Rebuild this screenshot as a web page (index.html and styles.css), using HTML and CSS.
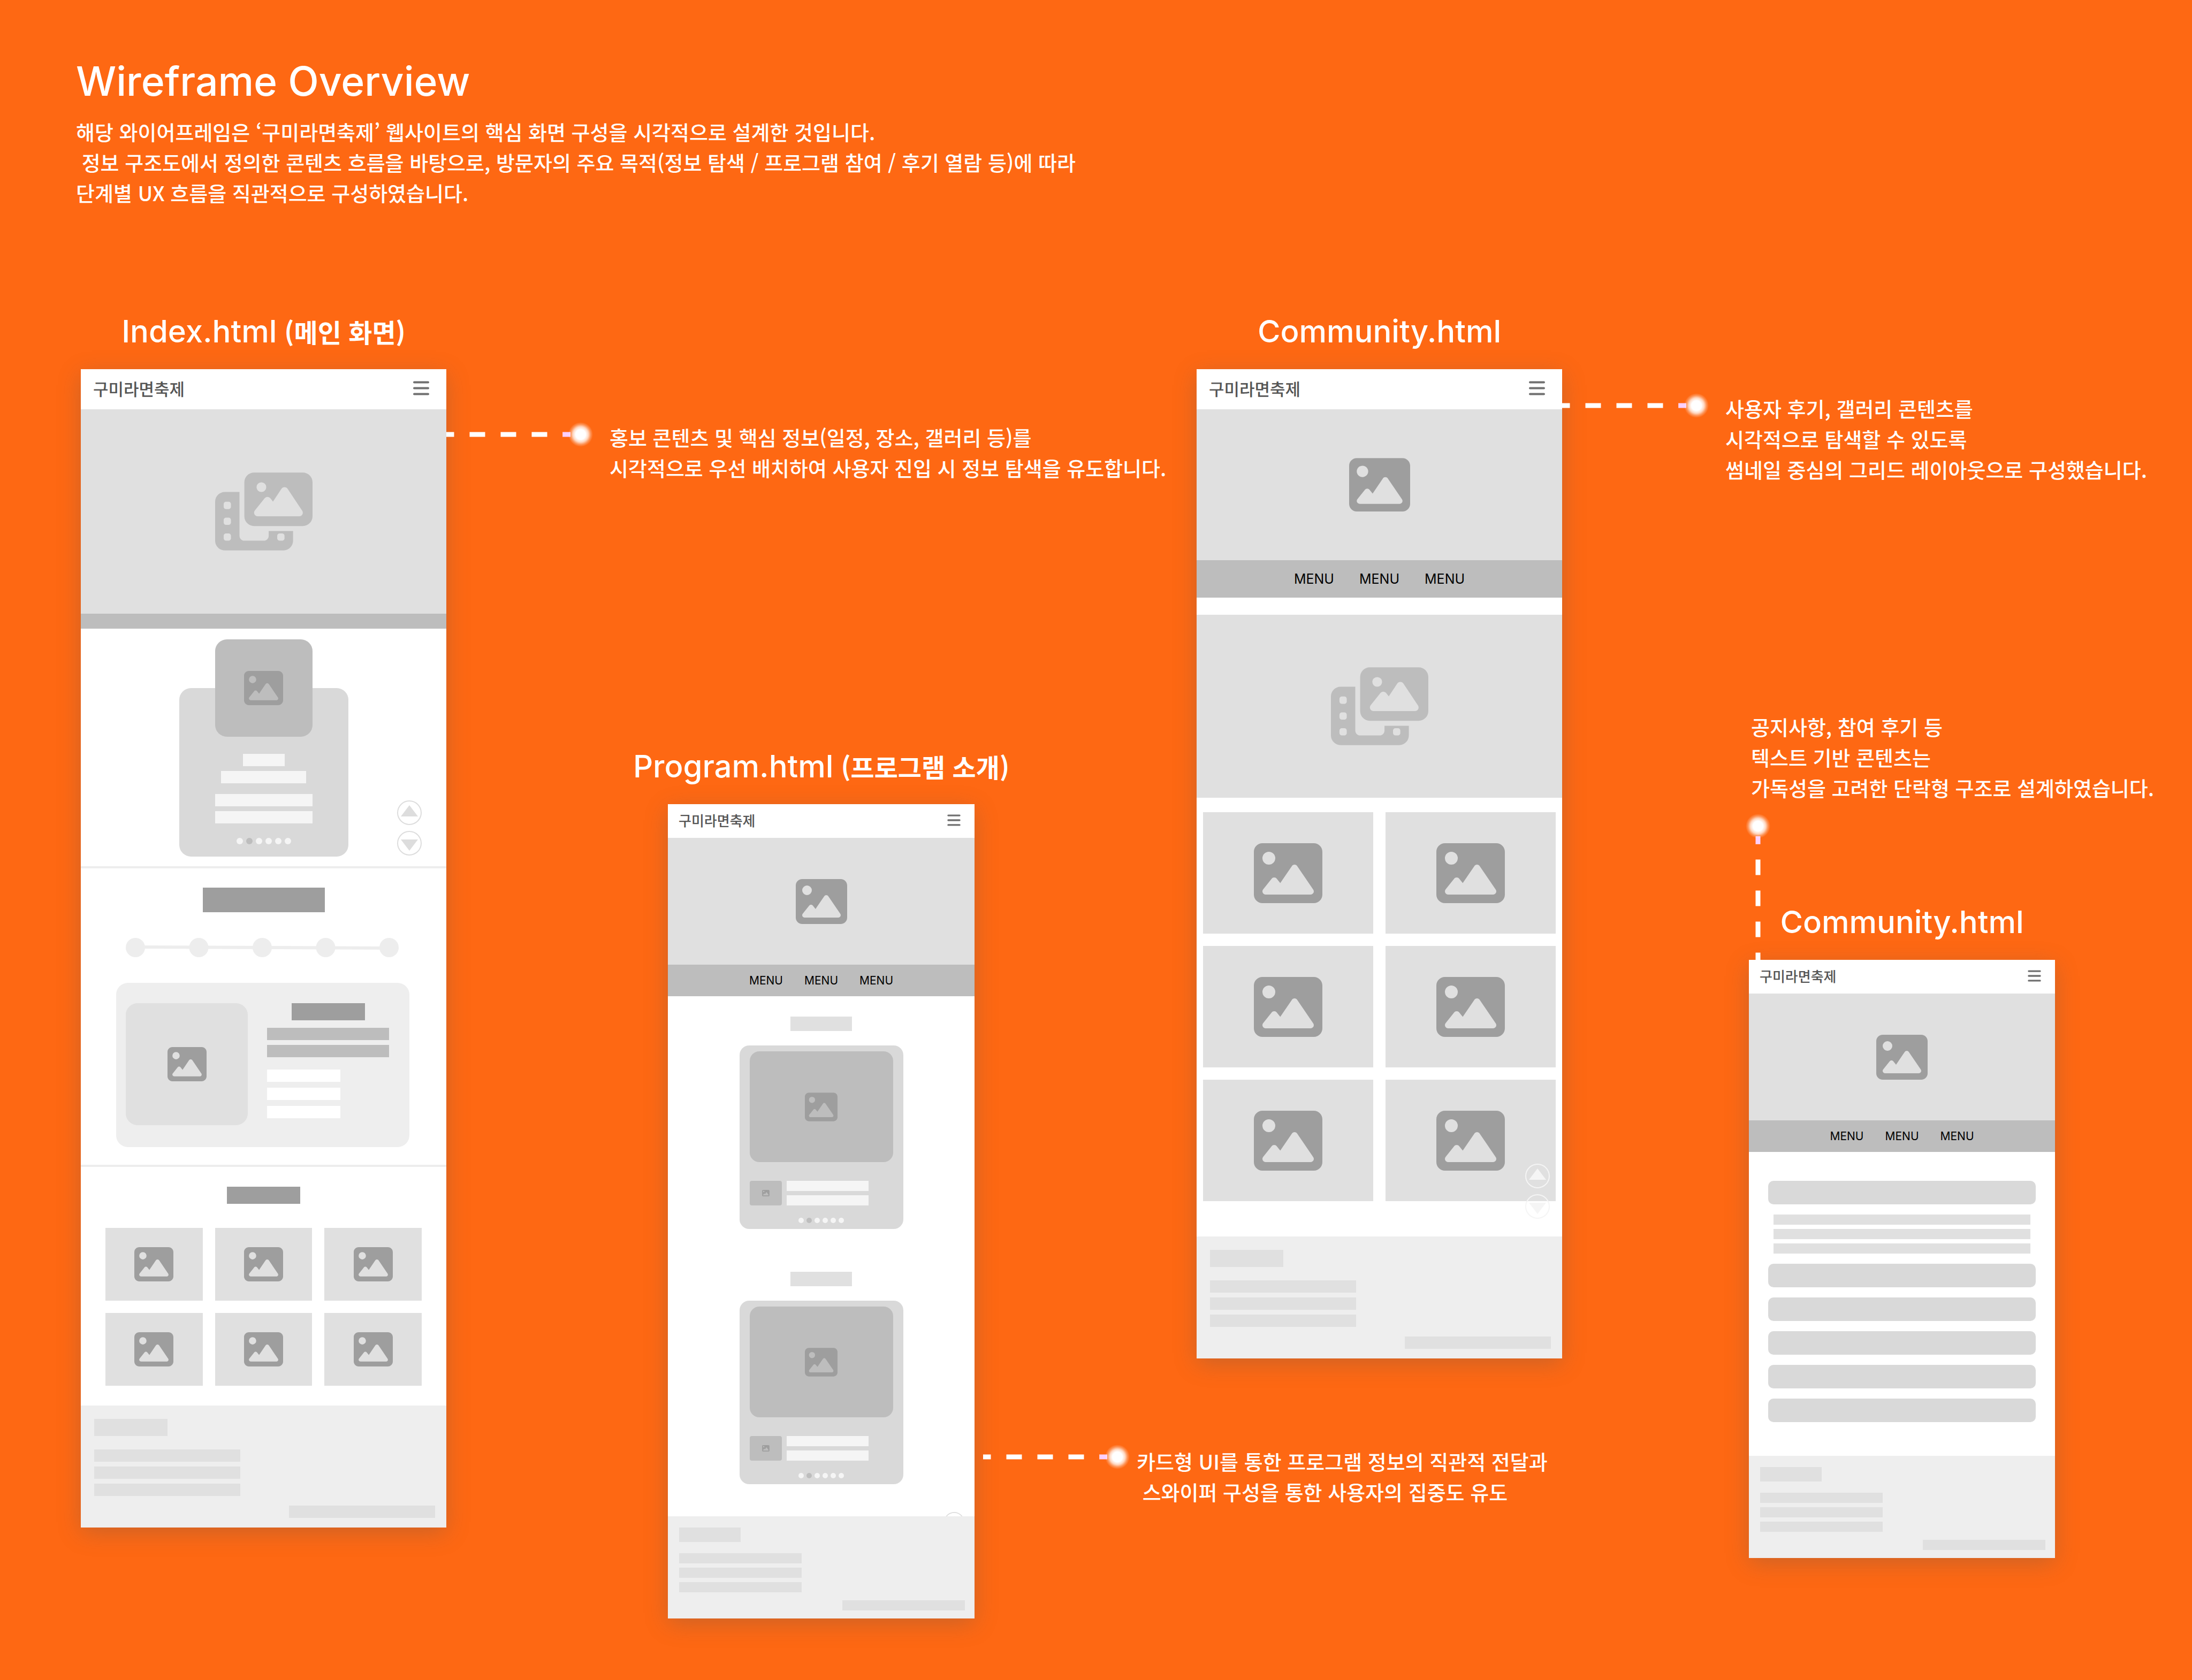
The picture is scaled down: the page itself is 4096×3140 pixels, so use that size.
FILE: index.html
```html
<!DOCTYPE html>
<html lang="ko">
<head>
<meta charset="utf-8">
<meta name="viewport" content="width=device-width, initial-scale=1">
<title>Wireframe Overview</title>
<link rel="stylesheet" href="styles.css">
</head>
<body>
<svg class="sprite" aria-hidden="true">
  <defs>
    <radialGradient id="glow">
      <stop offset="0" stop-color="#fff"/>
      <stop offset=".4" stop-color="#fff"/>
      <stop offset=".62" stop-color="#fff" stop-opacity=".75"/>
      <stop offset=".82" stop-color="#fff" stop-opacity=".28"/>
      <stop offset="1" stop-color="#fff" stop-opacity="0"/>
    </radialGradient>
  </defs>
  <symbol id="i-image" viewBox="0 32 512 448"><path fill="currentColor" d="M0 96C0 60.7 28.7 32 64 32H448c35.300 0 64 28.700 64 64V416c0 35.300-28.700 64-64 64H64c-35.300 0-64-28.700-64-64V96zM323.800 202.500c-4.500-6.600-11.900-10.500-19.800-10.500s-15.400 3.900-19.800 10.500l-87 127.600L170.700 297c-4.600-5.700-11.500-9-18.700-9s-14.200 3.300-18.700 9l-64 80c-5.800 7.200-6.900 17.100-2.900 25.400s12.400 13.600 21.600 13.600h96 32H424c8.900 0 17.100-4.900 21.200-12.800s3.600-17.400-1.400-24.700l-120-176zM112 192a48 48 0 1 0 0-96 48 48 0 1 0 0 96z"/></symbol>
  <symbol id="i-film" viewBox="0 0 640 512"><path fill="currentColor" fill-rule="evenodd" d="M256 0H576c35.300 0 64 28.700 64 64V288c0 35.300-28.700 64-64 64H256c-35.300 0-64-28.700-64-64V64c0-35.300 28.700-64 64-64zM476 106.700C471.500 100 464 96 456 96s-15.500 4-20 10.700l-56 84L362.700 169c-4.600-5.700-11.500-9-18.700-9s-14.200 3.300-18.700 9l-64 80c-5.800 7.200-6.900 17.100-2.900 25.400s12.400 13.600 21.600 13.600h80 48H552c8.900 0 17-4.900 21.200-12.700s3.700-17.300-1.200-24.600l-96-144zM336 96a32 32 0 1 0 -64 0 32 32 0 1 0 64 0zM64 128h96V384v32c0 17.700 14.300 32 32 32H320c17.700 0 32-14.300 32-32V384H512v64c0 35.300-28.700 64-64 64H64c-35.300 0-64-28.700-64-64V192c0-35.300 28.700-64 64-64zm8 64c-8.800 0-16 7.200-16 16v16c0 8.800 7.200 16 16 16H88c8.800 0 16-7.200 16-16V208c0-8.800-7.200-16-16-16H72zm0 104c-8.800 0-16 7.200-16 16v16c0 8.800 7.200 16 16 16H88c8.800 0 16-7.200 16-16V312c0-8.800-7.200-16-16-16H72zm0 104c-8.800 0-16 7.200-16 16v16c0 8.800 7.200 16 16 16H88c8.800 0 16-7.200 16-16V416c0-8.800-7.200-16-16-16H72zm336 16v16c0 8.800 7.200 16 16 16h16c8.800 0 16-7.200 16-16V416c0-8.800-7.200-16-16-16H424c-8.800 0-16 7.200-16 16z"/></symbol>
  <symbol id="i-menu" viewBox="0 0 30 27"><path fill="none" stroke="currentColor" stroke-width="4" stroke-linecap="round" d="M2 2.500H28M2 13.500H28M2 24.500H28"/></symbol>
  <symbol id="i-up" viewBox="0 0 46 46"><circle cx="23" cy="23" r="22" fill="none" stroke="currentColor" stroke-width="2"/><path fill="currentColor" d="M23 9L39 30H7z"/></symbol>
  <symbol id="i-down" viewBox="0 0 46 46"><circle cx="23" cy="23" r="22" fill="none" stroke="currentColor" stroke-width="2"/><path fill="currentColor" d="M23 37L7 16H39z"/></symbol>
  <symbol id="i-line" viewBox="0 0 275 48"><path stroke="#fff" stroke-width="9" stroke-dasharray="29 29" stroke-dashoffset="14.500" d="M0 24H218"/><path stroke="#fccfff" stroke-width="9" d="M217.500 24H232"/><circle cx="251" cy="24" r="23" fill="url(#glow)"/></symbol>
</svg>

<header class="intro">
  <h1 class="intro-title">Wireframe Overview</h1>
  <p class="intro-text">해당 와이어프레임은 ‘구미라면축제’ 웹사이트의 핵심 화면 구성을 시각적으로 설계한 것입니다.<br>&nbsp;정보 구조도에서 정의한 콘텐츠 흐름을 바탕으로, 방문자의 주요 목적(정보 탐색 / 프로그램 참여 / 후기 열람 등)에 따라<br>단계별 UX 흐름을 직관적으로 구성하였습니다.</p>
</header>

<main class="board">
  <section class="screen screen-index">
    <h2 class="screen-title">Index.html<span class="screen-name">(메인 화면)</span></h2>
    <div class="phone">
      <header class="topbar"><span class="brand">구미라면축제</span><button class="burger" type="button" aria-label="메뉴"><svg><use href="#i-menu"/></svg></button></header>
      <div class="hero hero-tall"><svg class="film"><use href="#i-film"/></svg></div>
      <div class="strip"></div>
      <section class="promo">
        <div class="promo-card">
          <div class="promo-thumb"><svg class="pic"><use href="#i-image"/></svg></div>
          <i class="bar pale w-xs"></i>
          <i class="bar pale w-md"></i>
          <i class="bar pale w-lg spaced"></i>
          <i class="bar pale w-lg"></i>
          <div class="dots"><i></i><i class="on"></i><i></i><i></i><i></i><i></i></div>
        </div>
        <div class="jump">
          <button type="button" aria-label="위로"><svg><use href="#i-up"/></svg></button>
          <button type="button" aria-label="아래로"><svg><use href="#i-down"/></svg></button>
        </div>
      </section>
      <section class="schedule">
        <div class="block-title block-title-lg"></div>
        <svg class="timeline" viewBox="0 0 510 38"><path stroke="currentColor" stroke-width="6" d="M18 18L492 20"/><g fill="currentColor"><circle cx="18" cy="19" r="18"/><circle cx="136.500" cy="19" r="18"/><circle cx="255" cy="19" r="18"/><circle cx="373.500" cy="19" r="18"/><circle cx="492" cy="19" r="18"/></g></svg>
        <div class="event">
          <div class="event-thumb"><svg class="pic"><use href="#i-image"/></svg></div>
          <div class="event-info">
            <i class="block-title"></i>
            <i class="bar mid"></i>
            <i class="bar mid"></i>
            <div class="event-list"><i class="bar white"></i><i class="bar white"></i><i class="bar white"></i></div>
          </div>
        </div>
      </section>
      <section class="gallery">
        <div class="block-title"></div>
        <div class="tiles tiles-3">
          <div class="tile"><svg class="pic"><use href="#i-image"/></svg></div>
          <div class="tile"><svg class="pic"><use href="#i-image"/></svg></div>
          <div class="tile"><svg class="pic"><use href="#i-image"/></svg></div>
          <div class="tile"><svg class="pic"><use href="#i-image"/></svg></div>
          <div class="tile"><svg class="pic"><use href="#i-image"/></svg></div>
          <div class="tile"><svg class="pic"><use href="#i-image"/></svg></div>
        </div>
      </section>
      <footer class="foot"><i class="foot-logo"></i><i class="foot-line"></i><i class="foot-line"></i><i class="foot-line"></i><i class="foot-line foot-copy"></i></footer>
    </div>
  </section>

  <aside class="note note-index">
    <svg class="lead"><use href="#i-line"/></svg>
    <p>홍보 콘텐츠 및 핵심 정보(일정, 장소, 갤러리 등)를<br>시각적으로 우선 배치하여 사용자 진입 시 정보 탐색을 유도합니다.</p>
  </aside>

  <section class="screen screen-program">
    <h2 class="screen-title">Program.html<span class="screen-name">(프로그램 소개)</span></h2>
    <div class="phone phone-sm">
      <header class="topbar"><span class="brand">구미라면축제</span><button class="burger" type="button" aria-label="메뉴"><svg><use href="#i-menu"/></svg></button></header>
      <div class="hero"><svg class="pic pic-hero"><use href="#i-image"/></svg></div>
      <nav class="menu"><a href="#">MENU</a><a href="#">MENU</a><a href="#">MENU</a></nav>
      <div class="programs">
        <section class="program">
          <div class="program-title"></div>
          <div class="program-card">
            <div class="program-photo"><svg class="pic"><use href="#i-image"/></svg></div>
            <div class="program-meta"><div class="avatar"><svg><use href="#i-image"/></svg></div><div class="meta-lines"><i class="bar pale"></i><i class="bar pale"></i></div></div>
            <div class="dots"><i></i><i class="on"></i><i></i><i></i><i></i><i></i></div>
          </div>
        </section>
        <section class="program">
          <div class="program-title"></div>
          <div class="program-card">
            <div class="program-photo"><svg class="pic"><use href="#i-image"/></svg></div>
            <div class="program-meta"><div class="avatar"><svg><use href="#i-image"/></svg></div><div class="meta-lines"><i class="bar pale"></i><i class="bar pale"></i></div></div>
            <div class="dots"><i></i><i class="on"></i><i></i><i></i><i></i><i></i></div>
          </div>
        </section>
        <div class="jump jump-tucked"><button type="button" aria-label="위로"><svg><use href="#i-up"/></svg></button></div>
      </div>
      <footer class="foot"><i class="foot-logo"></i><i class="foot-line"></i><i class="foot-line"></i><i class="foot-line"></i><i class="foot-line foot-copy"></i></footer>
    </div>
  </section>

  <aside class="note note-program">
    <svg class="lead"><use href="#i-line"/></svg>
    <p>카드형 UI를 통한 프로그램 정보의 직관적 전달과<br>&nbsp;스와이퍼 구성을 통한 사용자의 집중도 유도</p>
  </aside>

  <section class="screen screen-community">
    <h2 class="screen-title">Community.html</h2>
    <div class="phone">
      <header class="topbar"><span class="brand">구미라면축제</span><button class="burger" type="button" aria-label="메뉴"><svg><use href="#i-menu"/></svg></button></header>
      <div class="hero"><svg class="pic pic-hero"><use href="#i-image"/></svg></div>
      <nav class="menu"><a href="#">MENU</a><a href="#">MENU</a><a href="#">MENU</a></nav>
      <div class="feature"><svg class="film"><use href="#i-film"/></svg></div>
      <div class="feed">
        <div class="tiles tiles-2">
          <div class="tile"><svg class="pic pic-lg"><use href="#i-image"/></svg></div>
          <div class="tile"><svg class="pic pic-lg"><use href="#i-image"/></svg></div>
          <div class="tile"><svg class="pic pic-lg"><use href="#i-image"/></svg></div>
          <div class="tile"><svg class="pic pic-lg"><use href="#i-image"/></svg></div>
          <div class="tile"><svg class="pic pic-lg"><use href="#i-image"/></svg></div>
          <div class="tile"><svg class="pic pic-lg"><use href="#i-image"/></svg></div>
        </div>
        <div class="jump jump-light">
          <button type="button" aria-label="위로"><svg><use href="#i-up"/></svg></button>
          <button type="button" aria-label="아래로"><svg><use href="#i-down"/></svg></button>
        </div>
      </div>
      <footer class="foot"><i class="foot-logo"></i><i class="foot-line"></i><i class="foot-line"></i><i class="foot-line"></i><i class="foot-line foot-copy"></i></footer>
    </div>
  </section>

  <aside class="note note-community">
    <svg class="lead"><use href="#i-line"/></svg>
    <p>사용자 후기, 갤러리 콘텐츠를<br>시각적으로 탐색할 수 있도록<br>썸네일 중심의 그리드 레이아웃으로 구성했습니다.</p>
  </aside>

  <aside class="note note-board">
    <p>공지사항, 참여 후기 등<br>텍스트 기반 콘텐츠는<br>가독성을 고려한 단락형 구조로 설계하였습니다.</p>
    <svg class="lead-down" viewBox="0 0 48 275"><path stroke="#fff" stroke-width="9" stroke-dasharray="29 29" stroke-dashoffset="14.500" d="M24 275V57"/><path stroke="#fccfff" stroke-width="9" d="M24 57.500V43"/><circle cx="24" cy="24" r="23" fill="url(#glow)"/></svg>
  </aside>

  <section class="screen screen-board">
    <h2 class="screen-title">Community.html</h2>
    <div class="phone phone-sm">
      <header class="topbar"><span class="brand">구미라면축제</span><button class="burger" type="button" aria-label="메뉴"><svg><use href="#i-menu"/></svg></button></header>
      <div class="hero"><svg class="pic pic-hero"><use href="#i-image"/></svg></div>
      <nav class="menu"><a href="#">MENU</a><a href="#">MENU</a><a href="#">MENU</a></nav>
      <div class="posts">
        <div class="post"></div>
        <div class="post-body"><i></i><i></i><i></i></div>
        <div class="post"></div>
        <div class="post"></div>
        <div class="post"></div>
        <div class="post"></div>
        <div class="post"></div>
      </div>
      <footer class="foot"><i class="foot-logo"></i><i class="foot-line"></i><i class="foot-line"></i><i class="foot-line"></i><i class="foot-line foot-copy"></i></footer>
    </div>
  </section>
</main>
</body>
</html>
```
FILE: styles.css
```css
* { box-sizing: border-box; }

body {
  margin: 0;
  background: #fe6813;
  color: #fff;
  font-family: "Inter", "Noto Sans CJK KR", sans-serif;
}

h1, h2, p { margin: 0; }
i, svg { display: block; }
button { padding: 0; border: 0; background: none; color: inherit; }
.sprite { position: absolute; width: 0; height: 0; }

/* Intro */
.intro { padding: 104px 142px 195px; }
.intro-title { font-size: 75px; line-height: 96px; font-weight: 500; margin-bottom: 17px; }
.intro-text, .note p {
  font-family: "Noto Sans CJK KR", sans-serif;
  font-size: 38px;
  line-height: 57px;
  font-weight: 500;
  white-space: nowrap;
}

/* Board: screens sit in the even tracks, notes run across the gutters */
.board {
  display: grid;
  grid-template-columns: 151fr 683fr 414fr 573fr 415fr 683fr 349fr 572fr 256fr;
  align-items: start;
  padding-bottom: 113px;
}
.screen, .note { grid-row: 1; min-width: 0; }
.screen-index { grid-column: 2; }
.screen-program { grid-column: 4; margin-top: 813px; }
.screen-community { grid-column: 6; }
.screen-board { grid-column: 8; margin-top: 1104px; }

.screen-title {
  display: flex;
  align-items: center;
  justify-content: center;
  gap: 14px;
  margin-bottom: 35px;
  font-size: 58px;
  line-height: 72px;
  font-weight: 500;
  white-space: nowrap;
}
.screen-name {
  font-family: "Noto Sans CJK KR", sans-serif;
  font-size: 48px;
  font-weight: 700;
}

.note { display: flex; align-items: flex-start; gap: 30px; z-index: 1; }
.note-index { grid-column: 3 / 6; margin-top: 205px; }
.note-program { grid-column: 5 / 8; margin-top: 2116px; padding-left: 16px; gap: 12px; }
.note-program p { padding-top: 3px; }
.note-community { grid-column: 7 / 10; margin-top: 151px; }
.note-board { grid-column: 8 / 10; margin-top: 746px; flex-direction: column; gap: 20px; padding-left: 4px; }
.lead { flex: none; width: 275px; height: 48px; }
.lead-down { width: 48px; height: 275px; margin-left: -11px; }

/* Phone frame */
.phone { background: #fff; color: #9e9e9e; box-shadow: 0 10px 40px rgba(90, 90, 90, .3); }
.topbar {
  display: flex;
  align-items: center;
  justify-content: space-between;
  height: 75px;
  padding: 0 32px 4px 23px;
}
.brand {
  color: #555;
  font-family: "Noto Sans CJK KR", sans-serif;
  font-size: 31px;
  line-height: 40px;
  font-weight: 500;
}
.burger { color: #707070; }
.burger svg { width: 30px; height: 27px; }
.hero, .feature, .tile {
  display: flex;
  align-items: center;
  justify-content: center;
  background: #e0e0e0;
}
.hero { height: 282px; }
.hero-tall { height: 382px; }
.strip { height: 28px; background: #bdbdbd; }
.menu {
  display: flex;
  align-items: center;
  justify-content: center;
  gap: 47px;
  height: 70px;
  background: #bdbdbd;
}
.menu a { color: #000; font-size: 25px; line-height: 32px; text-decoration: none; }

.pic { width: 73px; height: 64px; }
.pic-hero { width: 114px; height: 100px; }
.pic-lg { width: 128px; height: 112px; }
.film { width: 182px; height: 146px; color: #bdbdbd; }

.bar { height: 23px; }
.pale { background: #f5f5f5; }
.mid { background: #bdbdbd; }
.white { background: #fff; }
.block-title { width: 137px; height: 32px; margin: 0 auto; background: #9e9e9e; }
.block-title-lg { width: 228px; height: 46px; }

.dots { display: flex; justify-content: center; gap: 6px; }
.dots i { width: 12px; height: 12px; border-radius: 50%; background: #f5f5f5; }
.dots .on { background: #bdbdbd; }

.jump { position: absolute; display: grid; gap: 11px; color: #ddd; }
.jump svg { width: 46px; height: 46px; }

/* Index: promo slider */
.promo { position: relative; padding: 111px 0 18px; border-bottom: 4px solid #ededed; }
.promo-card {
  display: flex;
  flex-direction: column;
  align-items: center;
  gap: 9px;
  width: 316px;
  height: 315px;
  margin: 0 auto;
  border-radius: 22px;
  background: #d9d9d9;
}
.promo-thumb {
  display: flex;
  align-items: center;
  justify-content: center;
  flex: none;
  width: 182px;
  height: 182px;
  margin: -91px 0 23px;
  border-radius: 22px;
  background: #bdbdbd;
}
.w-xs { width: 78px; }
.w-md { width: 159px; }
.w-lg { width: 182px; }
.spaced { margin-top: 11px; }
.promo-card .dots { margin-top: 18px; }
.promo .jump { right: 46px; bottom: 20px; }

/* Index: schedule */
.schedule { padding: 36px 66px 33px; border-bottom: 4px solid #ededed; }
.timeline { width: 510px; height: 38px; margin: 47px 23px 47px 18px; color: #ededed; }
.event { display: flex; gap: 36px; margin-right: 3px; padding: 38px 38px 41px 18px; border-radius: 22px; background: #eee; }
.event-thumb {
  display: flex;
  align-items: center;
  justify-content: center;
  flex: 1;
  height: 228px;
  border-radius: 22px;
  background: #e0e0e0;
}
.event-info { flex: 1; display: flex; flex-direction: column; gap: 9px; }
.event-info .block-title { margin-bottom: 5px; }
.event-list { display: grid; gap: 11px; width: 60%; margin-top: 14px; }

/* Index: gallery */
.gallery { padding: 37px 46px; }
.tiles { display: grid; gap: 23px; }
.tiles-3 { grid-template-columns: repeat(3, 1fr); margin-top: 45px; }
.tiles-3 .tile { height: 136px; }

/* Footer */
.foot { padding: 25px 21px 18px 25px; background: #eee; }
.foot i { background: #e0e0e0; }
.foot-logo { width: 137px; height: 32px; margin-bottom: 25px; }
.foot-line { width: 273px; height: 23px; margin-bottom: 9px; }
.foot-copy { margin: 18px 0 0 auto; }

/* Community gallery */
.feature { height: 342px; margin-top: 32px; }
.feed { position: relative; padding: 27px 12px 66px; }
.tiles-2 { grid-template-columns: repeat(2, 1fr); }
.tiles-2 .tile { height: 227px; }
.jump-light { right: 23px; bottom: 33px; color: #f5f5f5; }

/* Small phones */
.phone-sm .topbar { height: 63px; padding: 0 26px 3px 20px; }
.phone-sm .brand { font-size: 26px; }
.phone-sm .burger svg { width: 25px; height: 22px; }
.phone-sm .hero { height: 237px; }
.phone-sm .pic-hero { width: 96px; height: 84px; }
.phone-sm .menu { height: 59px; gap: 40px; }
.phone-sm .menu a { font-size: 21px; }
.phone-sm .bar { height: 19px; }
.phone-sm .foot { padding: 21px 18px 15px 21px; }
.phone-sm .foot-logo { width: 115px; height: 27px; margin-bottom: 21px; }
.phone-sm .foot-line { width: 229px; height: 19px; margin-bottom: 8px; }
.phone-sm .foot-copy { margin: 15px 0 0 auto; }

/* Program list */
.programs { position: relative; display: grid; gap: 80px; padding: 38px 0 60px; overflow: hidden; }
.program-title { width: 115px; height: 27px; margin: 0 auto 27px; background: #e0e0e0; }
.program-card { width: 306px; margin: 0 auto; padding: 11px 19px; border-radius: 18px; background: #d9d9d9; }
.program-photo {
  display: flex;
  align-items: center;
  justify-content: center;
  height: 207px;
  border-radius: 18px;
  background: #bdbdbd;
}
.program-photo .pic { width: 61px; height: 54px; }
.program-meta { display: flex; gap: 9px; margin: 35px 0 23px; }
.avatar {
  display: flex;
  align-items: center;
  justify-content: center;
  width: 60px;
  height: 46px;
  border-radius: 4px;
  background: #bdbdbd;
}
.avatar svg { width: 14px; height: 12px; }
.meta-lines { display: grid; gap: 8px; width: 153px; }
.program-card .dots { gap: 5px; }
.program-card .dots i { width: 10px; height: 10px; }
.jump-tucked { right: 19px; bottom: -30px; }
.jump-tucked svg { width: 38px; height: 38px; }

/* Board posts */
.posts { display: grid; gap: 19px; padding: 54px 36px 63px; }
.post { height: 44px; border-radius: 10px; background: #d9d9d9; }
.post-body { display: grid; gap: 8px; padding: 0 10px; }
.post-body i { height: 19px; background: #e0e0e0; }
```
